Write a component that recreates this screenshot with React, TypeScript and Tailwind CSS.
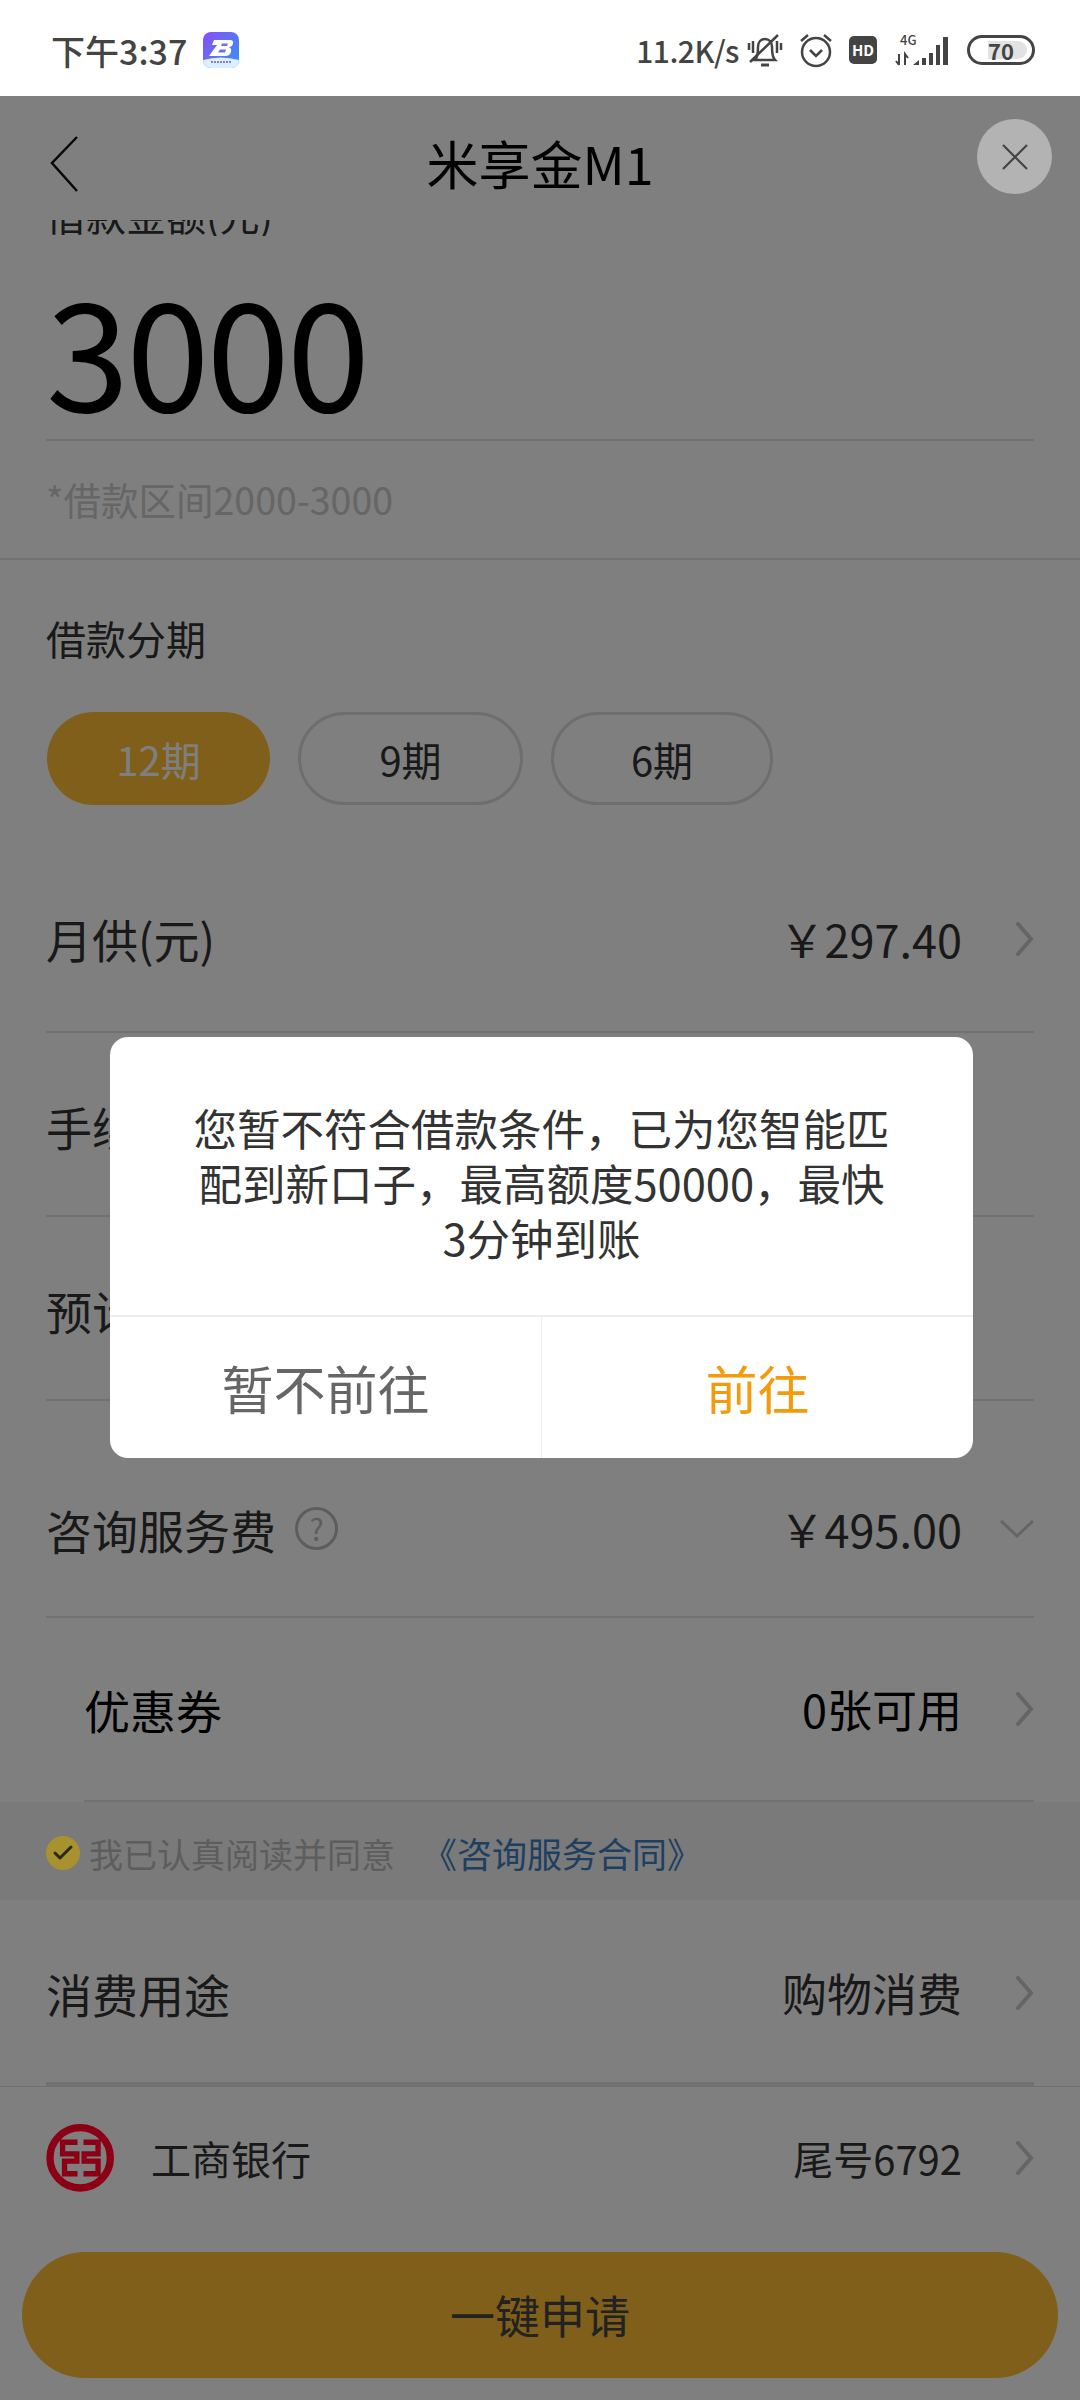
import { Check } from 'lucide-react';

const font = { fontFamily: '"Noto Sans CJK SC", "Noto Sans", sans-serif' };

function Arrow() {
  return (
    <svg viewBox="0 0 19 34" className="ml-[53px] h-[34px] w-[19px] shrink-0 text-[#cacaca]" fill="none" stroke="currentColor" strokeWidth="4" strokeLinecap="round">
      <path d="M3 2 L16 17 L3 32" />
    </svg>
  );
}

type RowProps = {
  label: string;
};

function Row({ label }: RowProps) {
  return (
    <div className="flex h-[184px] items-center border-b-2 border-[#e2e2e2] pt-[4px]">
      <span className="text-[46px] text-[#333]">{label}</span>
    </div>
  );
}

function IcbcLogo() {
  // sits above the dim layer so the dark red stays as in the picture
  return (
    <svg viewBox="50 40 205 205" className="relative z-20 h-[68px] w-[68px] shrink-0" fill="none" stroke="#8b0015">
      <circle cx="153" cy="142" r="91" strokeWidth="22" />
      <path d="M145 95 H100 V130 H143 V152 H106 V190 H145" strokeWidth="16" />
      <path d="M163 95 H207 V130 H165 V152 H207 V190 H163" strokeWidth="16" />
    </svg>
  );
}

function StatusBar() {
  return (
    <div className="relative z-30 flex h-[96px] items-center bg-white pl-[51px] pr-[45px] pt-[4px] text-[#444]">
      <span className="text-[34px] font-medium">下午3:37</span>
      <svg viewBox="0 0 36 36" className="ml-[16px] h-[36px] w-[36px]">
        <defs>
          <linearGradient id="appIcon" x1="0" y1="0" x2="1" y2="0.8">
            <stop offset="0" stopColor="#8a4ff2" />
            <stop offset="1" stopColor="#3a8ff6" />
          </linearGradient>
        </defs>
        <rect width="36" height="36" rx="8" fill="url(#appIcon)" />
        <path d="M0 28 Q18 23 36 28 A8 8 0 0 1 28 36 H8 A8 8 0 0 1 0 28Z" fill="#dcefff" />
        <path d="M8 30 H28" stroke="#6a5ad0" strokeWidth="1.5" strokeDasharray="2 1" />
        <path d="M11 8 H27 Q31 8 30 12 Q29 15 26 15.500 Q29 16 28 20 Q27 24 22 24 H6 L14 13 H9Z" fill="#fff" />
        <path d="M19 11.500 H25 L24 14 H18Z M17 17.500 H23 L22 20.500 H15Z" fill="#6f6cf0" />
      </svg>
      <span className="ml-auto text-[30px] font-medium tracking-[-0.5px]">11.2K/s</span>
      <svg viewBox="0 0 36 34" className="ml-[8px] h-[34px] w-[36px]" fill="none" stroke="#444" strokeWidth="2.5">
        <path d="M8 27 C11 24 11 17 11 14 C11 9 14 6 18 6 C22 6 25 9 25 14 C25 18 25 24 28 27 Z" />
        <path d="M3 29 L31 2" />
        <path d="M2 10 V17 M6 8 V20 M30 8 V20 M34 10 V17" />
        <path d="M14 32 H22" strokeWidth="3" />
      </svg>
      <svg viewBox="0 0 36 36" className="ml-[15px] h-[36px] w-[36px]" fill="none" stroke="#444" strokeWidth="2.5">
        <circle cx="18" cy="20" r="14" />
        <path d="M12 18 L18 24 L24 18" />
        <path d="M3 9 L10 3 M33 9 L26 3" />
      </svg>
      <span className="ml-[15px] flex h-[28px] w-[28px] items-center justify-center rounded-[5px] bg-[#444] text-[15px] font-bold text-white">HD</span>
      <svg viewBox="0 0 56 32" className="ml-[18px] h-[32px] w-[56px]" fill="#444">
        <text x="5" y="11" fontSize="13" fontWeight="500">4G</text>
        <path d="M4 20 V31 M1 27 L4 31 M10 31 V20 L13 24" stroke="#444" strokeWidth="2" fill="none" />
        <path d="M18 31 L24 26 V31Z M27 24 H31 V31 H27Z M34 19 H38 V31 H34Z M41 11 H45 V31 H41Z M48 3 H53 V31 H48Z" />
      </svg>
      <div className="relative ml-[16px] flex h-[30px] w-[68px] items-center justify-center rounded-full border-[3px] border-[#444]">
        <div className="absolute left-[18px] top-[3px] h-[18px] w-[39px] rounded-r-full bg-[#e2e2e2]" />
        <span className="relative text-[22px] leading-none font-semibold">70</span>
      </div>
    </div>
  );
}

function Page() {
  return (
    <div className="flex h-[2304px] flex-col bg-white">
      <header className="relative flex h-[124px] shrink-0 items-center justify-center bg-white pt-[10px]">
        <svg viewBox="0 0 28 56" className="absolute left-[50px] top-[40px] h-[56px] w-[28px]" fill="none" stroke="#111" strokeWidth="2.500">
          <path d="M27 1 L2 27 L27 55" />
        </svg>
        <h1 className="text-[52px] text-black">米享金M1</h1>
        <button className="absolute left-[977px] top-[23px] z-20 flex h-[75px] w-[75px] items-center justify-center rounded-full bg-[#b3b3b3]">
          <svg viewBox="0 0 26 26" className="h-[26px] w-[26px]" fill="none" stroke="#444" strokeWidth="2.200">
            <path d="M1 1 L25 25 M25 1 L1 25" />
          </svg>
        </button>
      </header>
      <div className="h-[16px] shrink-0 overflow-hidden px-[46px]">
        <div className="-mt-[35px] text-[40px] leading-[58px] text-[#333]">借款金额(元)</div>
      </div>
      <div className="mx-[46px] h-[205px] shrink-0 border-b-2 border-[#e2e2e2] pt-[21px] text-[150px] leading-[180px] tracking-[-3px] text-black">3000</div>
      <div className="flex h-[119px] shrink-0 items-center border-b-2 border-[#e2e2e2] px-[46px] text-[37.5px] text-[#ccc]">*借款区间2000-3000</div>
      <div className="h-[152px] shrink-0 px-[46px] pt-[48px] text-[40px] leading-[60px] text-[#333]">借款分期</div>
      <div className="flex shrink-0 gap-[28px] px-[47px]">
        <div className="flex h-[93px] w-[223px] items-center justify-center rounded-full bg-[#febe34] text-[40px] text-white">12期</div>
        <div className="flex h-[93px] w-[225px] items-center justify-center rounded-full border-[3px] border-[#dcdcdc] text-[40px] text-[#333]">9期</div>
        <div className="flex h-[93px] w-[222px] items-center justify-center rounded-full border-[3px] border-[#dcdcdc] text-[40px] text-[#333]">6期</div>
      </div>
      <div className="mx-[46px] mt-[41px] shrink-0">
        <div className="flex h-[187px] items-center border-b-2 border-[#e2e2e2]">
          <span className="text-[46px] text-[#333]">月供(元)</span>
          <span className="ml-auto text-[45px] text-[#333]">￥297.40</span>
          <Arrow />
        </div>
        <Row label="手续费(元)" />
        <Row label="预计到账" />
        <div className="flex h-[217px] items-center border-b-2 border-[#e2e2e2] pt-[40px]">
          <span className="text-[46px] leading-[60px] text-[#333]">咨询服务费</span>
          <span className="ml-[19px] flex h-[43px] w-[43px] items-center justify-center rounded-full border-[3px] border-[#bbb] text-[30px] text-[#bbb]">?</span>
          <span className="ml-auto text-[45px] leading-[60px] text-[#333]">￥495.00</span>
          <svg viewBox="0 0 34 18" className="ml-[38px] h-[18px] w-[34px] text-[#cacaca]" fill="none" stroke="currentColor" strokeWidth="3">
            <path d="M1 1 L17 16 L33 1" />
          </svg>
        </div>
        <div className="ml-[38px] flex h-[184px] items-center border-b-2 border-[#e2e2e2]">
          <span className="text-[46px] text-black">优惠券</span>
          <span className="ml-auto text-[45px] text-black">0张可用</span>
          <Arrow />
        </div>
      </div>
      <div className="flex h-[98px] shrink-0 items-center bg-[#f5f5f5] px-[46px] pt-[4px] text-[34px] text-[#bbb]">
        <span className="relative z-20 flex h-[34px] w-[34px] shrink-0 items-center justify-center rounded-full bg-[#a8922f]">
          <Check className="h-[24px] w-[24px] text-[#2a2a1a]" strokeWidth={3} />
        </span>
        <span className="ml-[9px]">我已认真阅读并同意</span>
        <span className="ml-[27px] text-[35px] text-[#3f7fc0]">《咨询服务合同》</span>
      </div>
      <div className="border-b border-[#e2e2e2]">
        <div className="mx-[46px] flex h-[186px] items-center border-b-[4px] border-[#e2e2e2] pt-[4px]">
          <span className="text-[46px] text-[#333]">消费用途</span>
          <span className="ml-auto text-[45px] text-[#333]">购物消费</span>
          <Arrow />
        </div>
      </div>
      <div className="mx-[46px] flex h-[141px] shrink-0 items-center">
        <IcbcLogo />
        <span className="ml-[37px] text-[40px] text-[#333]">工商银行</span>
        <span className="ml-auto text-[40px] text-[#333]">尾号6792</span>
        <Arrow />
      </div>
      <button className="mx-[22px] mt-[24px] flex h-[126px] shrink-0 items-center justify-center rounded-full bg-[#febe34] text-[45px] text-[#444]">一键申请</button>
    </div>
  );
}

function Dialog() {
  return (
    <div className="absolute left-[110px] top-[1037px] z-20 flex h-[421px] w-[863px] flex-col rounded-[18px] bg-white">
      <p className="h-[278px] px-[80px] pt-[63px] text-center text-[43.5px] leading-[55px] text-[#333]">
        您暂不符合借款条件，已为您智能匹配到新口子，最高额度50000，最快3分钟到账
      </p>
      <div className="flex flex-1 border-t-2 border-[#eee] text-[52px]">
        <div className="flex w-[432px] items-center justify-center border-r border-[#eee] text-[#666]">暂不前往</div>
        <div className="flex flex-1 items-center justify-center text-[#f29b0c]">前往</div>
      </div>
    </div>
  );
}

export default function App() {
  return (
    <div className="relative h-[2400px] w-[1080px] overflow-hidden bg-white" style={font}>
      <StatusBar />
      <Page />
      <div className="absolute inset-x-0 bottom-0 top-[96px] z-10 bg-black/50" />
      <Dialog />
    </div>
  );
}
